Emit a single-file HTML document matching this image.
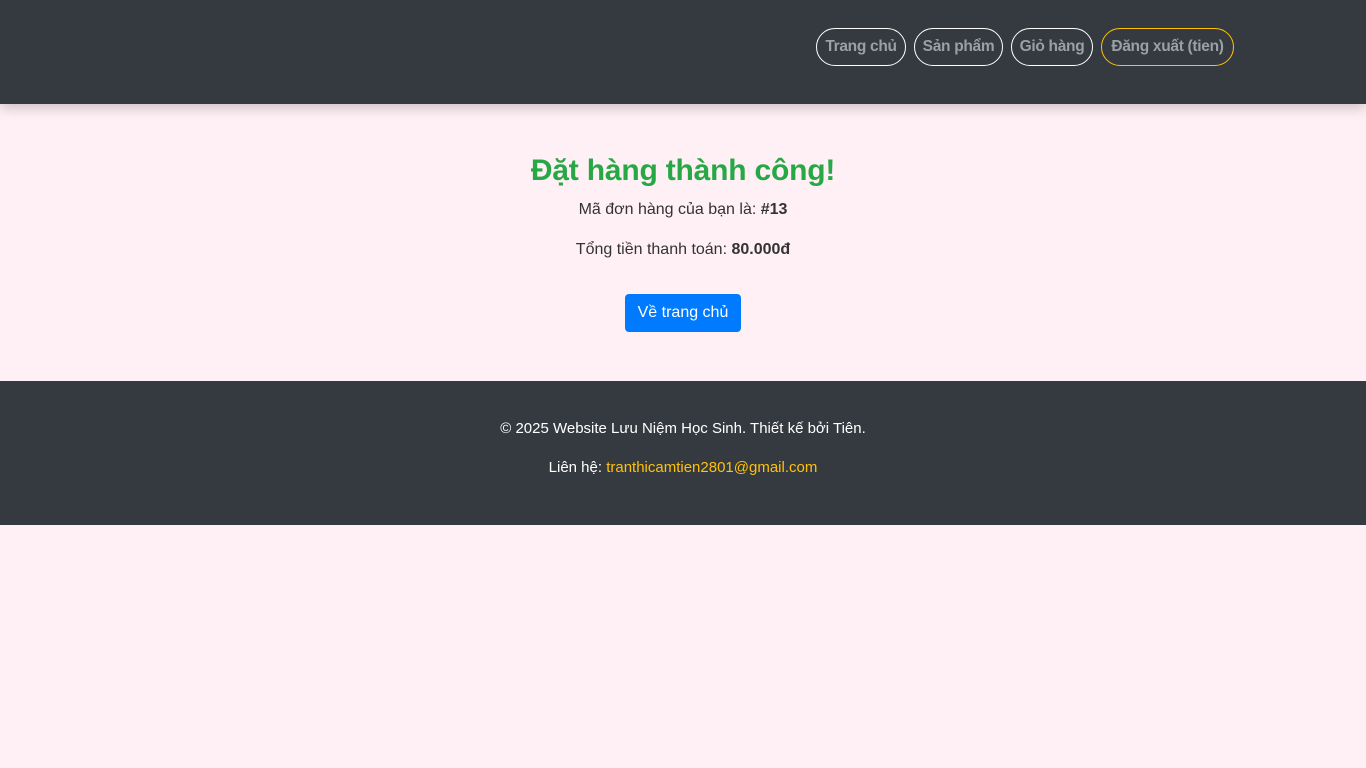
<!DOCTYPE html>
<html><head><meta charset="utf-8"><style>
*{box-sizing:border-box;margin:0;padding:0}
body{width:1366px;height:768px;background:#fff0f5;font-family:"Liberation Sans",sans-serif;color:#333;overflow:hidden;position:relative}
header{height:104px;background:#343a40;box-shadow:0 4px 12px rgba(0,0,0,.2);position:relative}
.nav a{position:absolute;top:28px;display:block;height:38px;line-height:36px;text-align:center;border:1.5px solid #fff;border-radius:19px;color:#9aa0a6;font-weight:bold;font-size:15.5px;text-decoration:none;letter-spacing:-0.3px}
.nav a.y{border-color:#ffc107}
h1{position:absolute;left:0;top:154px;width:100%;text-align:center;font-size:30px;color:#28a745;font-weight:bold;letter-spacing:-0.2px}
.p1{position:absolute;left:0;top:201px;width:100%;text-align:center;font-size:16px}
.p2{position:absolute;left:0;top:241px;width:100%;text-align:center;font-size:16px}
.btn{position:absolute;top:294px;left:625px;width:116px;height:38px;background:#007bff;color:#fff;border-radius:4px;line-height:38px;font-size:16px;text-align:center}
footer{position:absolute;top:381px;left:0;width:1366px;height:144px;background:#343a40;color:#fff;text-align:center;font-size:15px}
footer .a{position:absolute;left:0;top:39px;width:100%}
footer .b{position:absolute;left:0;top:78px;width:100%}
footer span{color:#ffc107}
</style></head><body>
<header><div class="nav"><a style="left:816px;width:90px">Trang chủ</a><a style="left:914px;width:89px">Sản phẩm</a><a style="left:1011px;width:82px">Giỏ hàng</a><a class="y" style="left:1101px;width:133px">Đăng xuất (tien)</a></div></header>
<h1>Đặt hàng thành công!</h1>
<div class="p1">Mã đơn hàng của bạn là: <b>#13</b></div>
<div class="p2">Tổng tiền thanh toán: <b>80.000đ</b></div>
<div class="btn">Về trang chủ</div>
<footer><div class="a">© 2025 Website Lưu Niệm Học Sinh. Thiết kế bởi Tiên.</div><div class="b">Liên hệ: <span>tranthicamtien2801@gmail.com</span></div></footer>
</body></html>
